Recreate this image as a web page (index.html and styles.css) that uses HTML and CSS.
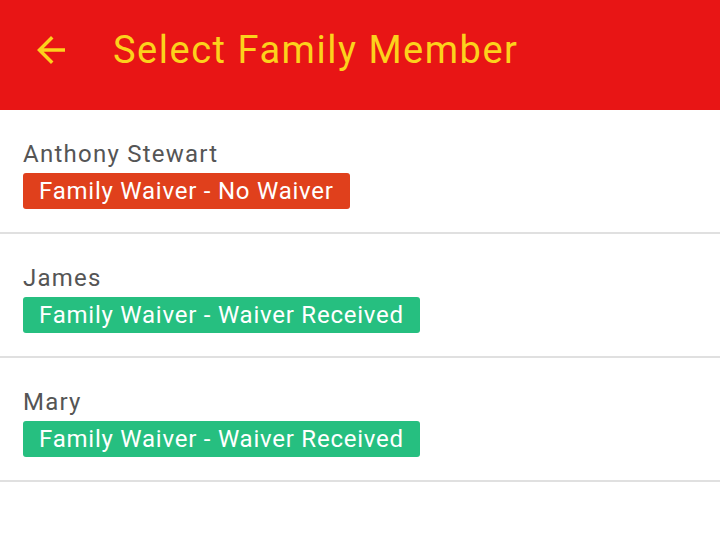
FILE: index.html
```html
<!DOCTYPE html>
<html>
<head>
<meta charset="utf-8">
<link rel="stylesheet" href="styles.css">
</head>
<body>
<header class="appbar">
  <svg class="back" width="42" height="42" viewBox="0 0 24 24"><path d="M20 11H7.83l5.59-5.59L12 4l-8 8 8 8 1.41-1.41L7.83 13H20v-2z" fill="#fcd21c"/></svg>
  <h1 class="title">Select Family Member</h1>
</header>
<ul class="list">
  <li class="row">
    <div class="name">Anthony Stewart</div>
    <span class="badge badge-none">Family Waiver - No Waiver</span>
  </li>
  <li class="row">
    <div class="name">James</div>
    <span class="badge badge-ok">Family Waiver - Waiver Received</span>
  </li>
  <li class="row">
    <div class="name">Mary</div>
    <span class="badge badge-ok">Family Waiver - Waiver Received</span>
  </li>
</ul>
</body>
</html>
```
FILE: styles.css
```css
* { box-sizing: border-box; }
html, body { margin: 0; padding: 0; background: #fff; }
body { font-family: Roboto, "Noto Sans", sans-serif; width: 720px; height: 559px; overflow: hidden; letter-spacing: 0.048em; }
.appbar {
  height: 110px;
  background: #e81515;
  display: flex;
  align-items: center;
  padding-left: 30px;
  padding-bottom: 10px;
}
.back { display: block; margin-right: 41px; }
.title {
  margin: 0;
  font-weight: 400;
  font-size: 38px;
  letter-spacing: 0.04em;
  color: #fcd21c;
  line-height: 1;
}
.list { list-style: none; margin: 0; padding: 0; }
.row {
  padding: 28px 23px 23px;
  border-bottom: 2px solid #e0e0e0;
  display: flex;
  flex-direction: column;
  align-items: flex-start;
}
.name {
  font-size: 24px;
  line-height: 32px;
  letter-spacing: 0.052em;
  color: #555555;
}
.badge {
  margin-top: 3px;
  height: 36px;
  line-height: 36px;
  padding: 0 16px;
  border-radius: 3px;
  color: #fff;
  font-size: 24px;
}
.badge-none { background: #e0401c; }
.badge-ok { background: #26bf80; }
```
